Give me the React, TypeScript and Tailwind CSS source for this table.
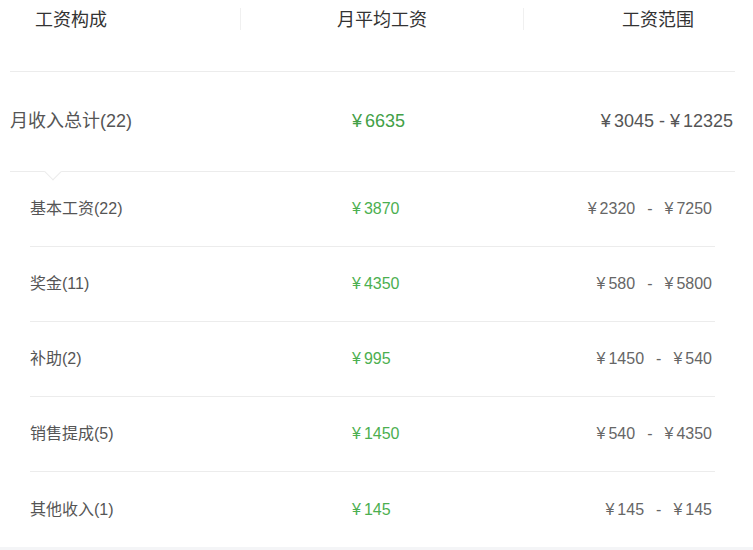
import React from 'react';

const rows = [
  { label: '基本工资(22)', avg: '3870', min: '2320', max: '7250' },
  { label: '奖金(11)', avg: '4350', min: '580', max: '5800' },
  { label: '补助(2)', avg: '995', min: '1450', max: '540' },
  { label: '销售提成(5)', avg: '1450', min: '540', max: '4350' },
  { label: '其他收入(1)', avg: '145', min: '145', max: '145' },
];

const font = { fontFamily: '"Liberation Sans", "Noto Sans CJK SC", sans-serif' };

// yen sign with a little breathing room before the number
const Money = ({ v }: { v: string }) => (
  <span>
    <span className="mr-[3px]">¥</span>
    {v}
  </span>
);

export default function App() {
  return (
    <div className="w-[753px] h-[550px] bg-white overflow-hidden flex flex-col" style={font}>
      {/* header */}
      <div className="mx-[10px] w-[725px] h-[72px] border-b border-[#ececec] flex text-[18px] text-[#333]">
        <div className="w-[230px] pl-[25px] pt-[7px] leading-[26px]">工资构成</div>
        <div className="w-[284px] relative flex justify-center pt-[7px] leading-[26px]">
          <span className="absolute left-0 top-[8px] h-[22px] w-px bg-[#f0f0f0]" />
          月平均工资
          <span className="absolute right-0 top-[8px] h-[22px] w-px bg-[#f0f0f0]" />
        </div>
        <div className="flex-1 pl-[98px] pt-[7px] leading-[26px]">工资范围</div>
      </div>

      {/* total row */}
      <div className="mx-[10px] w-[725px] h-[100px] border-b border-[#ececec] flex items-center text-[18px] relative">
        <div className="w-[342px] text-[#555]">月收入总计(22)</div>
        <div className="text-[#43a047]"><Money v="6635" /></div>
        <div className="ml-auto pr-[2px] text-[#555] flex items-center">
          <Money v="3045" />
          <span className="mx-[5px]">-</span>
          <Money v="12325" />
        </div>
        <span className="absolute left-[37px] -bottom-[7px] w-[12px] h-[12px] rotate-45 bg-white border-r border-b border-[#ececec]" />
      </div>

      {/* detail rows */}
      <div className="mx-[30px] w-[685px] flex flex-col">
        {rows.map((r, i) => (
          <div
            key={r.label}
            className={`h-[75px] flex items-center text-[16px] ${i < rows.length - 1 ? 'border-b border-[#ececec]' : ''}`}
          >
            <div className="w-[322px] text-[#555]">{r.label}</div>
            <div className="text-[#4caf50]"><Money v={r.avg} /></div>
            <div className="ml-auto pr-[3px] text-[#666] flex items-center">
              <Money v={r.min} />
              <span className="mx-[12px]">-</span>
              <Money v={r.max} />
            </div>
          </div>
        ))}
      </div>

      <div className="flex-1 bg-[#f4f5f7]" />
    </div>
  );
}
